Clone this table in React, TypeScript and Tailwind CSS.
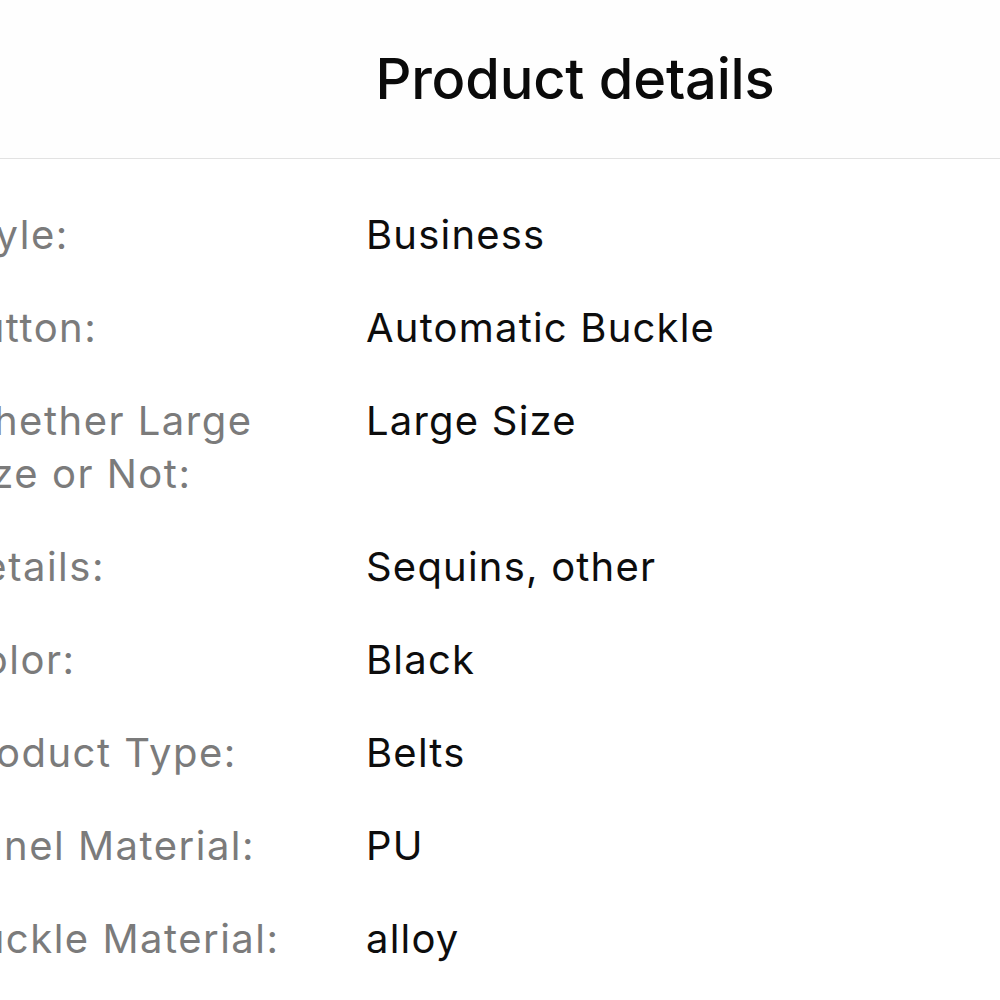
import React from "react";

const rows: [string, string][] = [
  ["Style:", "Business"],
  ["Button:", "Automatic Buckle"],
  ["Whether Large Size or Not:", "Large Size"],
  ["Details:", "Sequins, other"],
  ["Color:", "Black"],
  ["Product Type:", "Belts"],
  ["Panel Material:", "PU"],
  ["Buckle Material:", "alloy"],
];

export default function App() {
  return (
    <div className="w-[1000px] h-[1000px] overflow-hidden bg-white font-['Inter',sans-serif]">
      <div className="w-[1000px] h-[159px] border-b border-[#e2e2e2] bg-[#fefefe] overflow-hidden">
        <div className="w-[1150px] flex justify-center pt-[51px]">
          <h1 className="text-[56px] leading-[56px] font-medium text-[#0a0a0a] tracking-[-0.2px]">
            Product details
          </h1>
        </div>
      </div>
      <div className="-ml-[47px] pt-[49px] grid grid-cols-[367px_1fr] gap-x-[46px] gap-y-[40px] text-[40px] leading-[53px]">
        {rows.map(([k, v]) => (
          <React.Fragment key={k}>
            <div className="text-[#7b7b7b] tracking-[1.5px]">{k}</div>
            <div className="text-[#0d0d0d] tracking-[1.2px]">{v}</div>
          </React.Fragment>
        ))}
      </div>
    </div>
  );
}
